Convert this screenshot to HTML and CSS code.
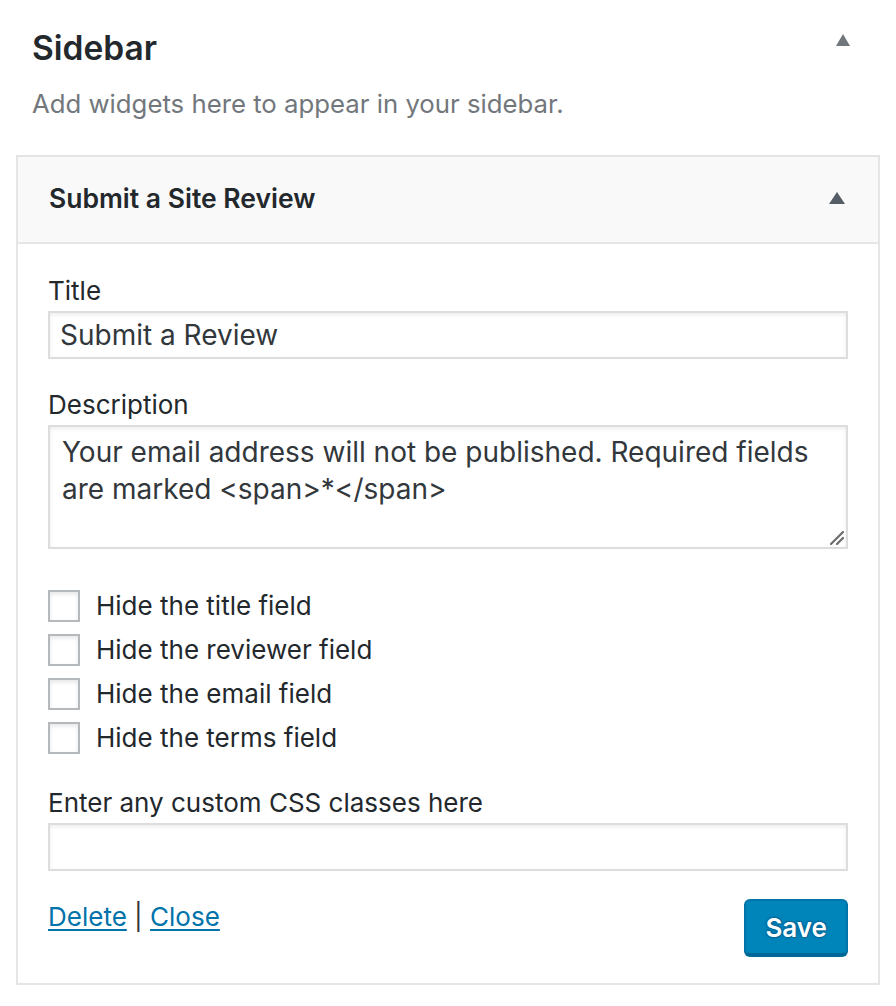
FILE: index.html
```html
<!DOCTYPE html>
<html lang="en">
<head>
<meta charset="utf-8">
<title>Sidebar widget</title>
<link rel="stylesheet" href="styles.css">
</head>
<body>
<div class="sidebar">
  <div class="sidebar-head">
    <h2 class="sidebar-title">Sidebar</h2>
    <span class="arrow arrow-light"></span>
  </div>
  <p class="sidebar-desc">Add widgets here to appear in your sidebar.</p>

  <div class="widget">
    <div class="widget-top">
      <h3 class="widget-title">Submit a Site Review</h3>
      <span class="arrow arrow-dark"></span>
    </div>
    <div class="widget-inside">
      <label class="field-label">Title</label>
      <input class="text-input" type="text" value="Submit a Review">

      <label class="field-label field-gap">Description</label>
      <div class="textarea-wrap">
        <textarea class="text-area">Your email address will not be published. Required fields are marked &lt;span&gt;*&lt;/span&gt;</textarea>
        <svg class="resize-grip" width="14" height="14" viewBox="0 0 14 14"><path d="M1 13 L13 1 M7 13 L13 7" stroke="#6c6c6c" stroke-width="2.2" stroke-linecap="round"/></svg>
      </div>

      <div class="checks">
        <label class="check-row"><span class="checkbox"></span><span>Hide the title field</span></label>
        <label class="check-row"><span class="checkbox"></span><span>Hide the reviewer field</span></label>
        <label class="check-row"><span class="checkbox"></span><span>Hide the email field</span></label>
        <label class="check-row"><span class="checkbox"></span><span>Hide the terms field</span></label>
      </div>

      <label class="field-label css-label">Enter any custom CSS classes here</label>
      <input class="text-input" type="text" value="">

      <div class="widget-actions">
        <div class="links"><a href="#" class="link">Delete</a> <span class="sep">|</span> <a href="#" class="link">Close</a></div>
        <button class="btn-primary" type="button">Save</button>
      </div>
    </div>
  </div>
</div>
</body>
</html>
```

FILE: styles.css
```css
* { box-sizing: border-box; }

html, body {
  margin: 0;
  padding: 0;
  background: #ffffff;
}

body {
  font-family: "Inter", "Liberation Sans", sans-serif;
  color: #23282d;
  width: 896px;
}

.sidebar {
  padding: 0 16px;
}

.sidebar-head {
  display: flex;
  justify-content: space-between;
  align-items: flex-start;
  padding: 28px 30px 0 16px;
}

.sidebar-title {
  margin: 0;
  font-size: 33.5px;
  line-height: 40px;
  font-weight: 600;
  color: #23282d;
}

.arrow {
  width: 0;
  height: 0;
  border-left: 7.5px solid transparent;
  border-right: 7.5px solid transparent;
}

.arrow-light {
  border-bottom: 12px solid #72777c;
  margin-top: 6px;
}

.arrow-dark {
  border-left-width: 8px;
  border-right-width: 8px;
  border-bottom: 12px solid #555d66;
  margin-top: 12px;
}

.sidebar-desc {
  margin: 18px 0 0 16px;
  font-size: 25.75px;
  line-height: 36px;
  color: #72777c;
}

.widget {
  margin-top: 33px;
  border: 2px solid #e5e5e5;
  background: #fff;
}

.widget-top {
  display: flex;
  justify-content: space-between;
  align-items: flex-start;
  background: #f9f9f9;
  border-bottom: 2px solid #e5e5e5;
  padding: 23px 33px 26px 31px;
}

.widget-title {
  margin: 0;
  font-size: 26.5px;
  line-height: 36px;
  font-weight: 600;
  color: #23282d;
}

.widget-inside {
  padding: 29px 30px 28px 30px;
}

.field-label {
  display: block;
  font-size: 26px;
  line-height: 36px;
  color: #23282d;
  margin-bottom: 2px;
}

.field-gap {
  margin-top: 28px;
}

.text-input {
  display: block;
  width: 100%;
  height: 48px;
  margin: 0;
  padding: 0 10px;
  border: 2px solid #dddddd;
  box-shadow: inset 0 2px 4px rgba(0, 0, 0, 0.07);
  font-family: "Inter", "Liberation Sans", sans-serif;
  font-size: 28px;
  color: #32373c;
  background: #fff;
  outline: none;
}

.textarea-wrap {
  position: relative;
}

.text-area {
  display: block;
  width: 100%;
  height: 124px;
  margin: 0;
  padding: 7px 12px 4px;
  border: 2px solid #dddddd;
  box-shadow: inset 0 2px 4px rgba(0, 0, 0, 0.07);
  font-family: "Inter", "Liberation Sans", sans-serif;
  font-size: 28px;
  line-height: 37px;
  color: #32373c;
  resize: none;
  overflow: hidden;
  outline: none;
}

.resize-grip {
  position: absolute;
  right: 4px;
  bottom: 4px;
}

.checks {
  display: flex;
  flex-direction: column;
  gap: 12px;
  margin-top: 41px;
}

.check-row {
  display: flex;
  align-items: center;
  height: 32px;
  gap: 16px;
  font-size: 26px;
  line-height: 32px;
  color: #23282d;
}

.checkbox {
  flex: none;
  width: 32px;
  height: 32px;
  border: 2px solid #b4b9be;
  background: #fff;
  box-shadow: inset 0 2px 4px rgba(0, 0, 0, 0.1);
}

.css-label {
  margin-top: 31px;
  margin-bottom: 2px;
}

.widget-actions {
  display: flex;
  justify-content: space-between;
  align-items: flex-start;
  margin-top: 28px;
}

.links {
  font-size: 26px;
  line-height: 36px;
  color: #32373c;
}

.link {
  color: #0073aa;
  text-decoration: underline;
  text-underline-offset: 3px;
  text-decoration-thickness: 2px;
}

.btn-primary {
  height: 56px;
  padding: 0 19px;
  border: 2px solid #0073aa;
  border-bottom-color: #006799;
  border-radius: 6px;
  background: #0085ba;
  box-shadow: 0 2px 0 #006799;
  color: #fff;
  font-family: "Inter", "Liberation Sans", sans-serif;
  font-size: 26px;
  font-weight: 600;
  text-shadow: 0 -1px 2px #006799, 1px 0 2px #006799, 0 1px 2px #006799, -1px 0 2px #006799;
  cursor: pointer;
}
```
